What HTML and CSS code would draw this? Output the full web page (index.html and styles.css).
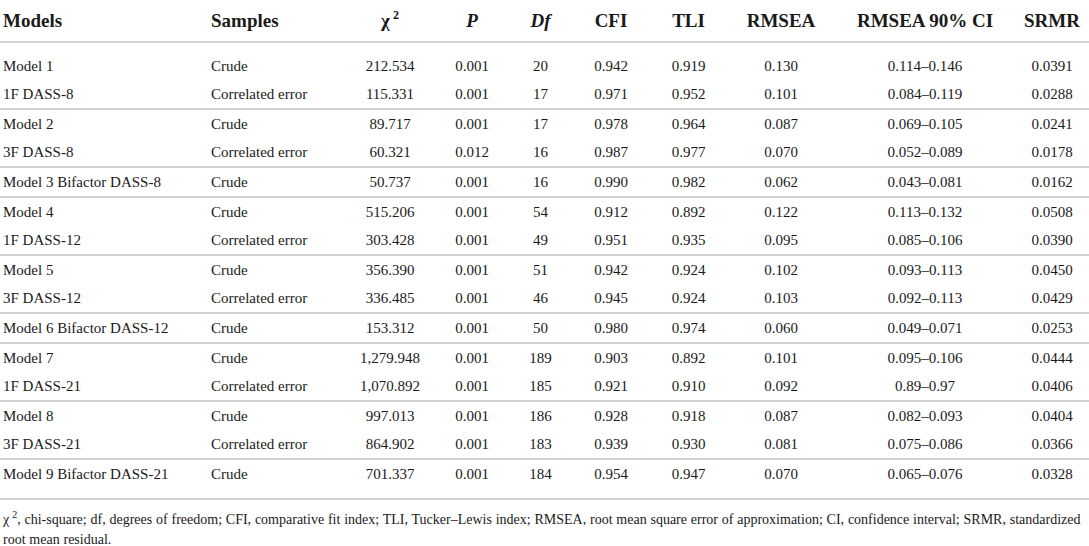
FILE: index.html
```html
<!DOCTYPE html>
<html lang="en">
<head>
<meta charset="utf-8">
<title>Model fit table</title>
<link rel="stylesheet" href="styles.css">
</head>
<body>
<table class="fit">
  <colgroup>
    <col class="c-models"><col class="c-samples"><col class="c-chi"><col class="c-p"><col class="c-df"><col class="c-cfi"><col class="c-tli"><col class="c-rmsea"><col class="c-ci"><col class="c-srmr">
  </colgroup>
  <thead>
    <tr>
      <th class="l">Models</th>
      <th class="l">Samples</th>
      <th><span class="chi">χ</span><sup>2</sup></th>
      <th><i>P</i></th>
      <th><i>Df</i></th>
      <th>CFI</th>
      <th>TLI</th>
      <th>RMSEA</th>
      <th>RMSEA 90% CI</th>
      <th>SRMR</th>
    </tr>
  </thead>
  <tbody class="grp first">
    <tr><td class="l">Model 1</td><td class="l">Crude</td><td>212.534</td><td>0.001</td><td>20</td><td>0.942</td><td>0.919</td><td>0.130</td><td>0.114–0.146</td><td>0.0391</td></tr>
    <tr><td class="l">1F DASS-8</td><td class="l">Correlated error</td><td>115.331</td><td>0.001</td><td>17</td><td>0.971</td><td>0.952</td><td>0.101</td><td>0.084–0.119</td><td>0.0288</td></tr>
  </tbody>
  <tbody class="grp">
    <tr><td class="l">Model 2</td><td class="l">Crude</td><td>89.717</td><td>0.001</td><td>17</td><td>0.978</td><td>0.964</td><td>0.087</td><td>0.069–0.105</td><td>0.0241</td></tr>
    <tr><td class="l">3F DASS-8</td><td class="l">Correlated error</td><td>60.321</td><td>0.012</td><td>16</td><td>0.987</td><td>0.977</td><td>0.070</td><td>0.052–0.089</td><td>0.0178</td></tr>
  </tbody>
  <tbody class="grp">
    <tr><td class="l">Model 3 Bifactor DASS-8</td><td class="l">Crude</td><td>50.737</td><td>0.001</td><td>16</td><td>0.990</td><td>0.982</td><td>0.062</td><td>0.043–0.081</td><td>0.0162</td></tr>
  </tbody>
  <tbody class="grp">
    <tr><td class="l">Model 4</td><td class="l">Crude</td><td>515.206</td><td>0.001</td><td>54</td><td>0.912</td><td>0.892</td><td>0.122</td><td>0.113–0.132</td><td>0.0508</td></tr>
    <tr><td class="l">1F DASS-12</td><td class="l">Correlated error</td><td>303.428</td><td>0.001</td><td>49</td><td>0.951</td><td>0.935</td><td>0.095</td><td>0.085–0.106</td><td>0.0390</td></tr>
  </tbody>
  <tbody class="grp">
    <tr><td class="l">Model 5</td><td class="l">Crude</td><td>356.390</td><td>0.001</td><td>51</td><td>0.942</td><td>0.924</td><td>0.102</td><td>0.093–0.113</td><td>0.0450</td></tr>
    <tr><td class="l">3F DASS-12</td><td class="l">Correlated error</td><td>336.485</td><td>0.001</td><td>46</td><td>0.945</td><td>0.924</td><td>0.103</td><td>0.092–0.113</td><td>0.0429</td></tr>
  </tbody>
  <tbody class="grp">
    <tr><td class="l">Model 6 Bifactor DASS-12</td><td class="l">Crude</td><td>153.312</td><td>0.001</td><td>50</td><td>0.980</td><td>0.974</td><td>0.060</td><td>0.049–0.071</td><td>0.0253</td></tr>
  </tbody>
  <tbody class="grp">
    <tr><td class="l">Model 7</td><td class="l">Crude</td><td>1,279.948</td><td>0.001</td><td>189</td><td>0.903</td><td>0.892</td><td>0.101</td><td>0.095–0.106</td><td>0.0444</td></tr>
    <tr><td class="l">1F DASS-21</td><td class="l">Correlated error</td><td>1,070.892</td><td>0.001</td><td>185</td><td>0.921</td><td>0.910</td><td>0.092</td><td>0.89–0.97</td><td>0.0406</td></tr>
  </tbody>
  <tbody class="grp">
    <tr><td class="l">Model 8</td><td class="l">Crude</td><td>997.013</td><td>0.001</td><td>186</td><td>0.928</td><td>0.918</td><td>0.087</td><td>0.082–0.093</td><td>0.0404</td></tr>
    <tr><td class="l">3F DASS-21</td><td class="l">Correlated error</td><td>864.902</td><td>0.001</td><td>183</td><td>0.939</td><td>0.930</td><td>0.081</td><td>0.075–0.086</td><td>0.0366</td></tr>
  </tbody>
  <tbody class="grp last">
    <tr><td class="l">Model 9 Bifactor DASS-21</td><td class="l">Crude</td><td>701.337</td><td>0.001</td><td>184</td><td>0.954</td><td>0.947</td><td>0.070</td><td>0.065–0.076</td><td>0.0328</td></tr>
  </tbody>
</table>
<p class="note"><span class="chi">χ</span><sup>2</sup>, chi-square; df, degrees of freedom; CFI, comparative fit index; TLI, Tucker–Lewis index; RMSEA, root mean square error of approximation; CI, confidence interval; SRMR, standardized root mean residual.</p>
</body>
</html>
```
FILE: styles.css
```css
html, body {
  margin: 0;
  padding: 0;
  background: #ffffff;
}

body {
  font-family: "Liberation Serif", "Times New Roman", serif;
  color: #1a1a1a;
  width: 1089px;
}

.fit {
  width: 1089px;
  border-collapse: collapse;
  table-layout: fixed;
}

.c-models { width: 208px; }
.c-samples { width: 137px; }
.c-chi { width: 90px; }
.c-p { width: 74px; }
.c-df { width: 63px; }
.c-cfi { width: 78px; }
.c-tli { width: 77px; }
.c-rmsea { width: 108px; }
.c-ci { width: 180px; }
.c-srmr { width: 74px; }

.fit thead th {
  font-size: 19px;
  font-weight: bold;
  height: 41px;
  padding: 0 3px;
  line-height: 20px;
  text-align: center;
  vertical-align: middle;
  border-bottom: 2px solid #d2d2d2;
  white-space: nowrap;
}

.fit thead th sup {
  font-size: 12px;
  line-height: 0;
  margin-left: 3px;
  vertical-align: 8px;
}

.fit td {
  font-size: 15px;
  line-height: 18px;
  padding: 5px 3px;
  text-align: center;
  white-space: nowrap;
}

.fit .l {
  text-align: left;
}

.grp {
  border-top: 2px solid #d2d2d2;
}

.grp.first {
  border-top: none;
}

.grp.first tr:first-child td {
  padding-top: 14px;
}

.grp.last {
  border-bottom: 2px solid #d2d2d2;
}

.grp.last td {
  padding-bottom: 15px;
}

.note {
  margin: 0;
  padding: 10px 3px 0;
  font-size: 14px;
  line-height: 20px;
  word-spacing: 0.3px;
}

.note sup {
  font-size: 10px;
  line-height: 0;
  margin-left: 3px;
  vertical-align: 6px;
}
```
